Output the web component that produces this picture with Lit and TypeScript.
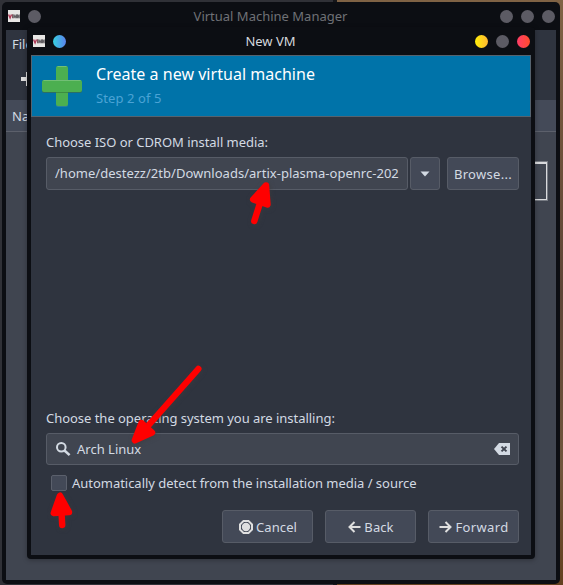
import { LitElement, html, css, svg } from "lit";
import { customElement, property } from "lit/decorators.js";

const plus = svg`
  <rect x="14" y="1" width="12" height="40" rx="2" fill="#287fa0"/>
  <rect x="0" y="15" width="40" height="12" rx="2" fill="#2a6f66"/>
  <rect x="14" y="0" width="12" height="40" rx="2" fill="#4caf50"/>
  <rect x="0" y="14" width="40" height="12" rx="2" fill="#4caf50"/>
  <path d="M1.5 14.5H38.5M15.5 .5H24.5" stroke="#72bf75" stroke-width="1"/>
  <path d="M14 26.5H26" stroke="#3c8c40" stroke-width="1"/>`;

@customElement("title-bar")
export class TitleBar extends LitElement {
  @property() label = "";
  @property({ type: Boolean }) active = false;

  static styles = css`
    :host { display: grid; grid-template-columns: 69px 1fr 90px; align-items: center; color: #6f7176; }
    :host([active]) { color: #d5d8de; }
    .side { display: flex; align-items: center; gap: 8px; }
    .left { padding-left: 2px; }
    .right { justify-content: flex-end; padding-right: 1px; }
    .title { text-align: center; white-space: nowrap; }
    .dot { width: 13px; height: 13px; border-radius: 50%; background: #5c5b64; }
    :host([active]) .menu { background: linear-gradient(90deg, #37d0e0, #5b82ec); }
    :host([active]) .min { background: linear-gradient(90deg, #ffee08, #ffb833); }
    :host([active]) .close { background: linear-gradient(90deg, #ff3d68, #ff4c2c); }
    .logo { width: 12px; height: 12px; display: block; }
  `;

  render() {
    return html`
      <div class="side left">
        <svg class="logo" viewBox="0 0 12 12">
          <rect width="12" height="12" fill="#e8e6e4"/>
          <path d="M.6 4.5L2.1 8L3.5 4.5" fill="none" stroke="#b03a58" stroke-width="1.4"/>
          <path d="M4.6 4.3V8.2" stroke="#7d555c" stroke-width="1.2"/>
          <path d="M5.8 8.2V4.6L7.1 7.4L8.4 4.6V8.2M9.5 8.2V4.6L11.2 8.2V4.6" fill="none" stroke="#625e62" stroke-width="1.1"/>
        </svg>
        <div class="dot menu"></div>
      </div>
      <div class="title">${this.label}</div>
      <div class="side right">
        <div class="dot min"></div><div class="dot"></div><div class="dot close"></div>
      </div>`;
  }
}

@customElement("app-root")
export class AppRoot extends LitElement {
  static styles = css`
    :host {
      display: block; position: relative; width: 563px; height: 585px; overflow: hidden;
      font: 13px "Noto Sans", sans-serif; color: #d3dae3;
      background: linear-gradient(90deg, #303137 0 333px, #15161a 333px 337px, transparent 337px),
        linear-gradient(180deg, #806345 0, #72553c 20%, #5d4536 50%, #70563c 80%, #63401f 100%);
    }
    * { box-sizing: border-box; }
    .main {
      position: absolute; left: 2px; top: 2px; width: 558px; height: 582px;
      background: #0c0e13; border-radius: 5px; padding: 0 4px 4px; display: flex; flex-direction: column;
    }
    .main title-bar { height: 28px; flex: none; }
    .main-body { flex: 1; background: #404550; overflow: hidden; }
    .tools { height: 70px; background: #2f343f; padding: 4px 6px 0; display: flex; flex-direction: column; gap: 19px; }
    .menu-label { line-height: 20px; }
    .add { width: 14px; height: 14px; margin-left: 9px; margin-top: -1px; }
    .columns { height: 32px; background: #444a58; border-bottom: 1px solid #5c606b; padding: 0 6px; line-height: 32px; }
    .vm-row { height: 38px; margin: 30px 9px 0 60px; border: 1px solid #d8d9dc; border-top-width: 2px; box-shadow: 0 0 0 1px #777b83; }
    .dialog {
      position: absolute; left: 27px; top: 27px; width: 508px; height: 532px;
      background: #0c0e13; border-radius: 4px; padding: 0 4px 4px; display: flex; flex-direction: column;
      box-shadow: 0 1px 5px rgba(0, 0, 0, .3);
    }
    .dialog title-bar { height: 28px; flex: none; }
    .panel { flex: 1; background: #2f343f; display: flex; flex-direction: column; }
    .banner {
      height: 62px; flex: none; background: #0073a9; border: 1px solid #55636f;
      display: flex; gap: 14px; padding: 10px 10px 0; color: #fff;
    }
    .plus { width: 40px; height: 42px; flex: none; }
    .banner-text { display: flex; flex-direction: column; }
    .heading { font-size: 16px; line-height: 20px; margin-top: -2px; white-space: nowrap; letter-spacing: .03px; }
    .step { line-height: 20px; margin-top: 4px; color: #4ba3d5; letter-spacing: .1px; }
    .form { flex: 1; padding: 15px 12px 12px 15px; display: flex; flex-direction: column; }
    .label { line-height: 20px; height: 20px; white-space: nowrap; letter-spacing: -.03px; }
    .media { display: flex; margin-top: 5px; height: 33px; }
    .field, .btn {
      border: 1px solid #575c67; border-radius: 3px; background: #404550;
      display: flex; align-items: center; white-space: nowrap;
    }
    .btn { background: #434957; justify-content: center; letter-spacing: .1px; }
    .path { width: 362px; padding: 0 8px 1px; letter-spacing: .02px; }
    .drop { width: 30px; margin-left: 2px; }
    .browse { width: 72px; margin-left: 7px; padding-top: 1px; letter-spacing: .3px; }
    .spacer { flex: 1; }
    .search { height: 32px; margin-top: 5px; padding: 0 8px; gap: 6px; }
    .search-text { flex: 1; }
    .check { display: flex; align-items: center; gap: 5px; margin: 8px 0 0 5px; height: 20px; letter-spacing: -.03px; }
    .box { width: 16px; height: 16px; border: 1px solid #5b606c; border-radius: 2px; background: #434957; }
    .actions { display: flex; justify-content: flex-end; gap: 12px; margin-top: 17px; height: 33px; }
    .actions .btn { width: 91px; gap: 3px; padding: 1px 0 0 1px; }
    .actions .forward { letter-spacing: .35px; }
    svg { display: block; flex: none; }
    .arrows {
      position: absolute; inset: 0; filter: drop-shadow(1px 1px 2px rgba(60, 60, 60, .6));
    }
  `;

  render() {
    return html`
      <div class="main">
        <title-bar label="Virtual Machine Manager"></title-bar>
        <div class="main-body">
          <div class="tools">
            <div class="menu-label">File</div>
            <svg class="add" viewBox="0 0 14 14"><path d="M7 0V14M0 7H14" stroke="#dfdfdf" stroke-width="4"/></svg>
          </div>
          <div class="columns">Name</div>
          <div class="vm-row"></div>
        </div>
      </div>

      <div class="dialog">
        <title-bar active label="New VM"></title-bar>
        <div class="panel">
          <div class="banner">
            <svg class="plus" viewBox="0 0 40 42">${plus}</svg>
            <div class="banner-text">
              <div class="heading">Create a new virtual machine</div>
              <div class="step">Step 2 of 5</div>
            </div>
          </div>
          <div class="form">
            <div class="label">Choose ISO or CDROM install media:</div>
            <div class="media">
              <div class="field path">/home/destezz/2tb/Downloads/artix-plasma-openrc-202</div>
              <div class="btn drop"><svg width="10" height="6" viewBox="0 0 10 6"><path d="M.5 .5H9.5L5 5.5Z" fill="#d3dae3"/></svg></div>
              <div class="btn browse">Browse...</div>
            </div>
            <div class="spacer"></div>
            <div class="label">Choose the operating system you are installing:</div>
            <div class="field search">
              <svg width="16" height="16" viewBox="0 0 16 16" fill="none" stroke="#d3dae3"><circle cx="6.3" cy="6.3" r="4.3" stroke-width="2"/><path d="M9.5 9.5L14.6 14.2" stroke-width="2.5"/></svg>
              <span class="search-text">Arch Linux</span>
              <svg width="16" height="12" viewBox="0 0 16 12"><path d="M5 0H16V12H5L0 6Z" fill="#d3dae3"/><path d="M7.5 3.6L12.5 8.4M12.5 3.6L7.5 8.4" stroke="#404550" stroke-width="2"/></svg>
            </div>
            <div class="check"><div class="box"></div><span>Automatically detect from the installation media / source</span></div>
            <div class="actions">
              <div class="btn">
                <svg width="14" height="14" viewBox="0 0 14 14"><path d="M4.5 1H9.5L13 4.5V9.5L9.5 13H4.5L1 9.5V4.5Z" fill="none" stroke="#dfdfdf" stroke-width="2"/><circle cx="7" cy="7" r="4.2" fill="#dfdfdf"/></svg>
                <span>Cancel</span>
              </div>
              <div class="btn">
                <svg width="13" height="12" viewBox="0 0 13 12"><path d="M12.5 6H2M6.5 1L1.5 6L6.5 11" fill="none" stroke="#dfdfdf" stroke-width="2"/></svg>
                <span>Back</span>
              </div>
              <div class="btn forward">
                <svg width="13" height="12" viewBox="0 0 13 12"><path d="M.5 6H11M6.5 1L11.5 6L6.5 11" fill="none" stroke="#dfdfdf" stroke-width="2"/></svg>
                <span>Forward</span>
              </div>
            </div>
          </div>
        </div>
      </div>

      <svg class="arrows" width="563" height="585" viewBox="0 0 563 585" fill="#f00" stroke="#f00" stroke-width="6.4" stroke-linejoin="round" stroke-linecap="round">
        <path d="M266 185.5L253.2 199.5L267.5 204.5Z"/><path d="M260 203L254.3 221"/>
        <path d="M134.8 440.3L141.5 423L152 432.5Z"/><path d="M147 427L198.3 369"/>
        <path d="M60 495.7L53.8 513L69 512Z"/><path d="M61.5 512L62.2 525"/>
      </svg>`;
  }
}
